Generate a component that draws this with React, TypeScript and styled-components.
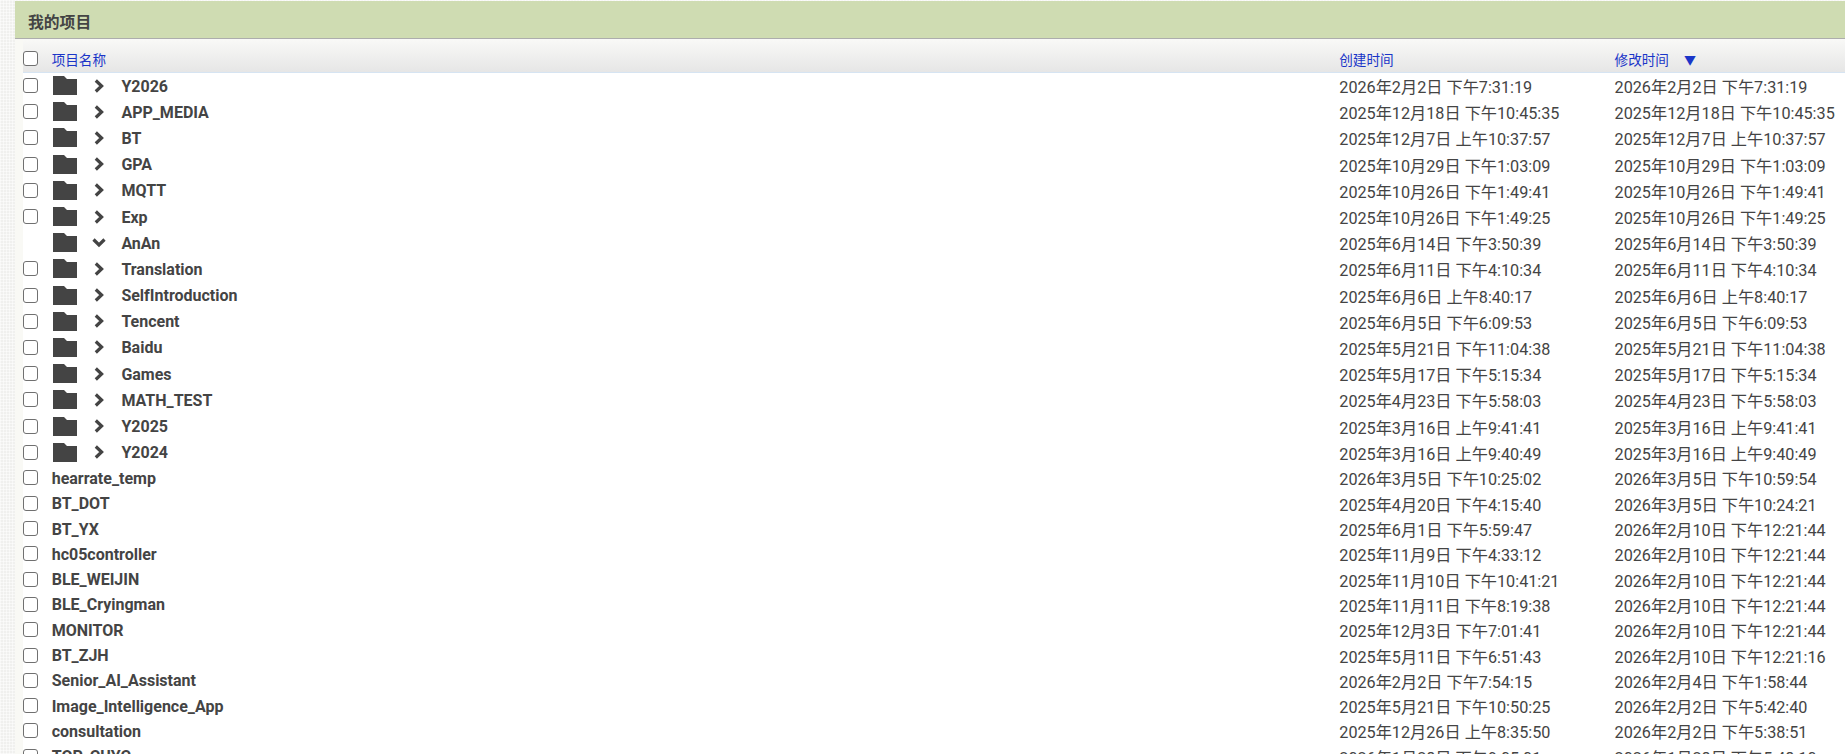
import React from "react";
import styled, { createGlobalStyle } from "styled-components";

const GlobalStyle = createGlobalStyle`
  html, body {
    margin: 0;
    padding: 0;
    height: 754px;
    overflow: hidden;
    background-color: #f0f0ee;
    background-image:
      repeating-linear-gradient(0deg, rgba(255, 255, 255, 0.5) 0 1px, transparent 1px 3px),
      repeating-linear-gradient(90deg, rgba(255, 255, 255, 0.5) 0 1px, transparent 1px 3px);
    font-family: Roboto, "Noto Sans CJK SC", sans-serif;
    color: #444;
  }
`;

const Page = styled.div`
  height: 754px;
  overflow: hidden;
  padding: 1px 0 0 15px;
  box-sizing: border-box;
`;

const TitleBar = styled.div`
  height: 38px;
  box-sizing: border-box;
  background: #cfdcb2;
  border-bottom: 1px solid #adadad;
  padding-left: 13px;
  font-size: 15.8px;
  font-weight: bold;
  line-height: 44px;
  color: #444;
`;

const Panel = styled.div`
  background: #f9f9f5;
  padding-left: 8px;
  height: 720px;
`;

const Table = styled.div`
  background: #fff;
`;

const Row = styled.div<{ $h: number }>`
  display: grid;
  grid-template-columns: 28.7px 1287.6px 275.3px 1fr;
  height: ${(p) => p.$h}px;
  align-items: center;
`;

const HeadRow = styled(Row)`
  background: linear-gradient(#f9f9f7, #e6e6e6);
  border-bottom: 1px solid #d6e4f2;
  box-sizing: border-box;
  padding-top: 7px;
  color: #1a35c8;
  font-size: 13.6px;
`;

const Box = styled.span`
  display: block;
  box-sizing: border-box;
  width: 15px;
  height: 15px;
  margin-top: -1px;
  border: 1px solid #707070;
  border-radius: 3px;
  background: #fff;
`;

const BoxSpace = styled.span`
  display: block;
`;

const NameCell = styled.div`
  display: flex;
  align-items: center;
  font-size: 16px;
  font-weight: bold;
  color: #444;
  white-space: nowrap;
`;

const DateCell = styled.div`
  font-size: 16.2px;
  color: #444;
  white-space: nowrap;
`;

const FolderIcon = styled.svg`
  width: 24px;
  height: 19px;
  margin: -1px 0 0 1px;
  flex: none;
  fill: #444;
`;

const ChevronIcon = styled.svg`
  width: 24px;
  height: 24px;
  margin: -1px 10.7px 0 10px;
  flex: none;
  fill: none;
  stroke: #444;
  stroke-width: 3.2;
`;

const SortMark = styled.span`
  margin-left: 15px;
  font-size: 12px;
  color: #1a35c8;
`;

const Folder = () => (
  <FolderIcon viewBox="0 0 24 19">
    <path d="M0 0h11l3 3h10v16H0z" />
  </FolderIcon>
);

const Chevron = ({ open }: { open?: boolean }) => (
  <ChevronIcon viewBox="0 0 24 24">
    {open ? <path d="M6.5 8.5 12 14l5.5-5.5" /> : <path d="M8.8 6.5 14.6 12l-5.8 5.5" />}
  </ChevronIcon>
);

interface Item {
  name: string;
  created: string;
  modified: string;
  folder?: boolean;
  open?: boolean;
}

const same = (name: string, d: string, open?: boolean): Item => ({
  name,
  created: d,
  modified: d,
  folder: true,
  open,
});

const items: Item[] = [
  same("Y2026", "2026年2月2日 下午7:31:19"),
  same("APP_MEDIA", "2025年12月18日 下午10:45:35"),
  same("BT", "2025年12月7日 上午10:37:57"),
  same("GPA", "2025年10月29日 下午1:03:09"),
  same("MQTT", "2025年10月26日 下午1:49:41"),
  same("Exp", "2025年10月26日 下午1:49:25"),
  same("AnAn", "2025年6月14日 下午3:50:39", true),
  same("Translation", "2025年6月11日 下午4:10:34"),
  same("SelfIntroduction", "2025年6月6日 上午8:40:17"),
  same("Tencent", "2025年6月5日 下午6:09:53"),
  same("Baidu", "2025年5月21日 下午11:04:38"),
  same("Games", "2025年5月17日 下午5:15:34"),
  same("MATH_TEST", "2025年4月23日 下午5:58:03"),
  same("Y2025", "2025年3月16日 上午9:41:41"),
  same("Y2024", "2025年3月16日 上午9:40:49"),
  { name: "hearrate_temp", created: "2026年3月5日 下午10:25:02", modified: "2026年3月5日 下午10:59:54" },
  { name: "BT_DOT", created: "2025年4月20日 下午4:15:40", modified: "2026年3月5日 下午10:24:21" },
  { name: "BT_YX", created: "2025年6月1日 下午5:59:47", modified: "2026年2月10日 下午12:21:44" },
  { name: "hc05controller", created: "2025年11月9日 下午4:33:12", modified: "2026年2月10日 下午12:21:44" },
  { name: "BLE_WEIJIN", created: "2025年11月10日 下午10:41:21", modified: "2026年2月10日 下午12:21:44" },
  { name: "BLE_Cryingman", created: "2025年11月11日 下午8:19:38", modified: "2026年2月10日 下午12:21:44" },
  { name: "MONITOR", created: "2025年12月3日 下午7:01:41", modified: "2026年2月10日 下午12:21:44" },
  { name: "BT_ZJH", created: "2025年5月11日 下午6:51:43", modified: "2026年2月10日 下午12:21:16" },
  { name: "Senior_AI_Assistant", created: "2026年2月2日 下午7:54:15", modified: "2026年2月4日 下午1:58:44" },
  { name: "Image_Intelligence_App", created: "2025年5月21日 下午10:50:25", modified: "2026年2月2日 下午5:42:40" },
  { name: "consultation", created: "2025年12月26日 上午8:35:50", modified: "2026年2月2日 下午5:38:51" },
  { name: "TOP_CUYC", created: "2026年1月28日 下午9:05:01", modified: "2026年1月28日 下午5:48:10" },
];

export default function App() {
  return (
    <Page>
      <GlobalStyle />
      <TitleBar>我的项目</TitleBar>
      <Panel>
        <Table>
          <HeadRow $h={34}>
            <Box />
            <span>项目名称</span>
            <span>创建时间</span>
            <span>
              修改时间<SortMark>▼</SortMark>
            </span>
          </HeadRow>
          {items.map((item) => (
            <Row key={item.name} $h={item.folder ? 26.2 : 25.3}>
              {item.open ? <BoxSpace /> : <Box />}
              <NameCell>
                {item.folder && <Folder />}
                {item.folder && <Chevron open={item.open} />}
                {item.name}
              </NameCell>
              <DateCell>{item.created}</DateCell>
              <DateCell>{item.modified}</DateCell>
            </Row>
          ))}
        </Table>
      </Panel>
    </Page>
  );
}
